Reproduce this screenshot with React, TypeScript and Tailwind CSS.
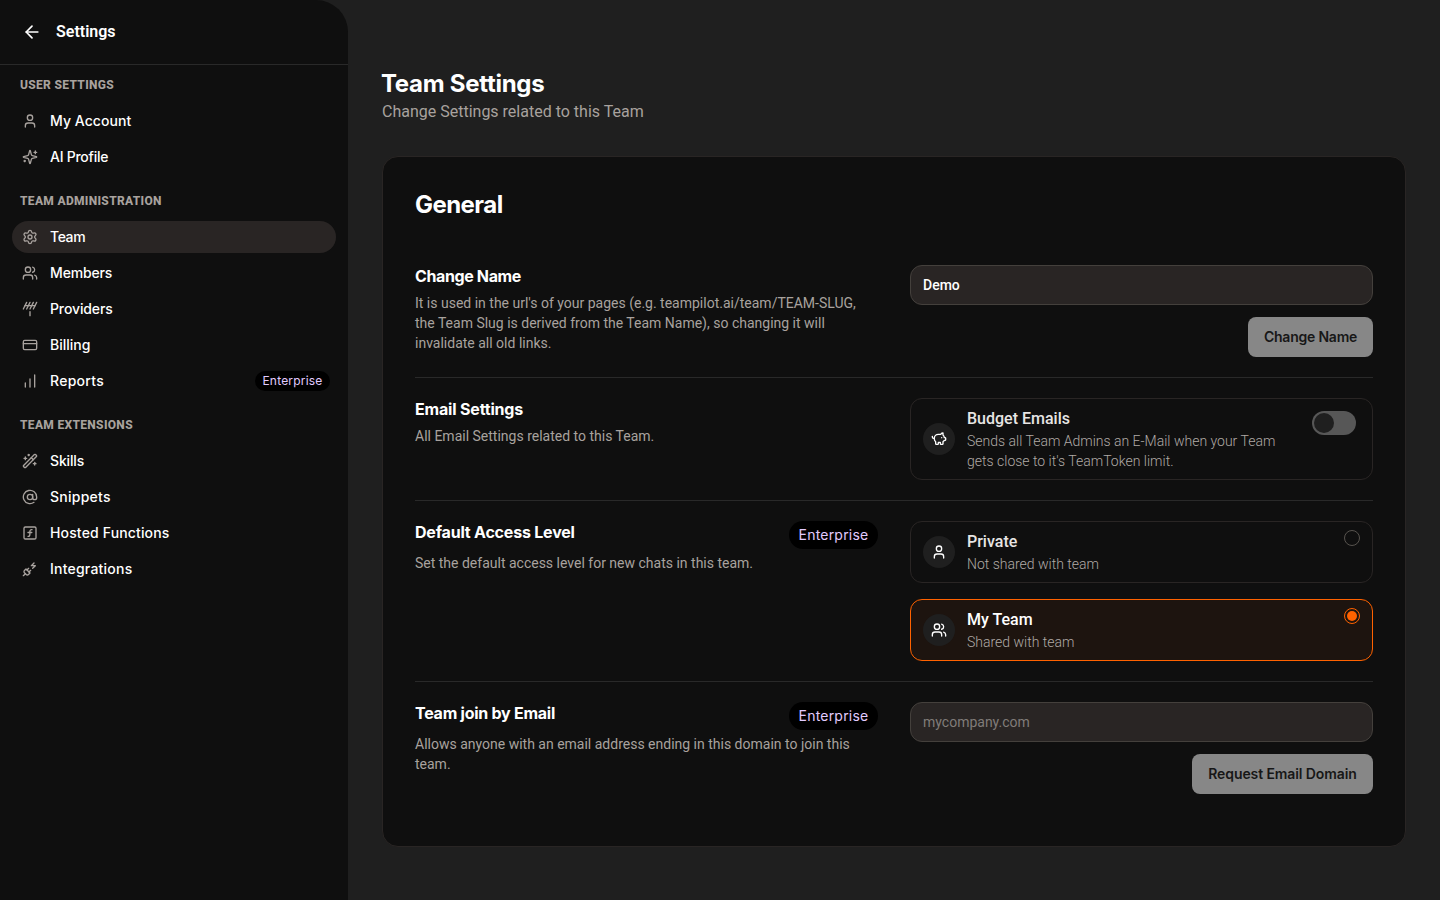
import type { ComponentType, ReactNode } from 'react'
import {
  Antenna,
  ArrowLeft,
  AtSign,
  ChartNoAxesColumnIncreasing,
  CreditCard,
  PiggyBank,
  PlugZap,
  Settings,
  SquareFunction,
  User,
  Users,
  WandSparkles,
} from 'lucide-react'

type Icon = ComponentType<{ className?: string }>

interface NavItem {
  name: string
  icon: Icon
  tracking: string
  active?: boolean
  enterprise?: boolean
}

interface NavGroup {
  title: string
  items: NavItem[]
}

function Sparkles({ className }: { className?: string }) {
  return (
    <svg
      viewBox="0 0 24 24"
      fill="none"
      stroke="currentColor"
      strokeWidth="2"
      strokeLinecap="round"
      strokeLinejoin="round"
      className={className}
    >
      <path d="M9.937 15.5A2 2 0 0 0 8.5 14.063l-6.135-1.582a.5.5 0 0 1 0-.962L8.5 9.936A2 2 0 0 0 9.937 8.5l1.582-6.135a.5.5 0 0 1 .963 0L14.063 8.5A2 2 0 0 0 15.5 9.937l6.135 1.581a.5.5 0 0 1 0 .964L15.5 14.063a2 2 0 0 0-1.437 1.437l-1.582 6.135a.5.5 0 0 1-.963 0z" />
      <path d="M20 3v4" />
      <path d="M22 5h-4" />
      <path d="M4 17v2" />
      <path d="M5 18H3" />
    </svg>
  )
}

const groups: NavGroup[] = [
  {
    title: 'User Settings',
    items: [
      { name: 'My Account', icon: User, tracking: 'tracking-[0.05px]' },
      { name: 'AI Profile', icon: Sparkles, tracking: 'tracking-[-0.25px]' },
    ],
  },
  {
    title: 'Team Administration',
    items: [
      { name: 'Team', icon: Settings, tracking: 'tracking-[-0.4px]', active: true },
      { name: 'Members', icon: Users, tracking: 'tracking-[-0.15px]' },
      { name: 'Providers', icon: Antenna, tracking: 'tracking-[-0.12px]' },
      { name: 'Billing', icon: CreditCard, tracking: 'tracking-normal' },
      { name: 'Reports', icon: ChartNoAxesColumnIncreasing, tracking: 'tracking-[0.28px]', enterprise: true },
    ],
  },
  {
    title: 'Team Extensions',
    items: [
      { name: 'Skills', icon: WandSparkles, tracking: 'tracking-[-0.15px]' },
      { name: 'Snippets', icon: AtSign, tracking: 'tracking-[0.25px]' },
      { name: 'Hosted Functions', icon: SquareFunction, tracking: 'tracking-[0.15px]' },
      { name: 'Integrations', icon: PlugZap, tracking: 'tracking-[0.22px]' },
    ],
  },
]

function Sidebar() {
  return (
    <aside className="w-[348px] h-full shrink-0 rounded-tr-[32px] bg-[#0f0f0f]">
      <div className="h-[65px] flex items-center gap-3.5 border-b border-[#292929] px-[22px]">
        <ArrowLeft className="w-5 h-5 text-white" />
        <h2 className="text-base font-semibold text-white">Settings</h2>
      </div>

      <nav className="px-3 pt-3">
        {groups.map((group) => (
          <div key={group.title} className="mb-5">
            <h3 className="h-4 mb-3 px-2 text-xs leading-4 font-extrabold uppercase tracking-[0.32px] text-[#a8a29e]">
              {group.title}
            </h3>
            <div className="flex flex-col gap-1">
              {group.items.map((item) => (
                <a
                  key={item.name}
                  href="#"
                  className={`h-8 flex items-center rounded-full pl-2.5 pr-1.5 ${item.active ? 'bg-[#292524]' : ''}`}
                >
                  <item.icon className="w-4 h-4 mr-3 text-[#a8a29e]" />
                  <span className={`font-['Inter'] text-sm font-medium text-white ${item.tracking}`}>{item.name}</span>
                  {item.enterprise && (
                    <span className="ml-auto w-[75px] h-5 flex items-center justify-center rounded-full bg-black font-['Inter'] text-xs tracking-[0.2px] text-[#e2cbff]">
                      Enterprise
                    </span>
                  )}
                </a>
              ))}
            </div>
          </div>
        ))}
      </nav>
    </aside>
  )
}

interface SettingRowProps {
  title: string
  titleClass: string
  description: string
  enterprise?: boolean
  children: ReactNode
}

function SettingRow({ title, titleClass, description, enterprise, children }: SettingRowProps) {
  return (
    <section className="grid grid-cols-2 gap-8 border-b border-[#292929] py-5 last:border-b-0">
      <div>
        <div className="flex items-start justify-between">
          <h3 className={`pb-0.5 font-['Inter'] text-base leading-[22px] font-bold text-white ${titleClass}`}>
            {title}
          </h3>
          {enterprise && (
            <span className="w-[89px] h-7 flex items-center justify-center rounded-full bg-black font-['Inter'] text-sm tracking-[0.2px] text-[#e2cbff]">
              Enterprise
            </span>
          )}
        </div>
        <p className="mt-1 text-sm leading-5 text-[#a8a29e]">{description}</p>
      </div>
      <div className="flex flex-col">{children}</div>
    </section>
  )
}

interface OptionCardProps {
  icon: Icon
  title: string
  description: string
  selected?: boolean
  control: ReactNode
}

function OptionCard({ icon: Icon, title, description, selected, control }: OptionCardProps) {
  return (
    <div
      className={`flex items-center rounded-xl border px-3 py-[7px] ${
        selected ? 'border-[#ff6200] bg-[#1d140f]' : 'border-[#292524]'
      }`}
    >
      <div className="w-8 h-8 flex shrink-0 items-center justify-center rounded-full bg-[#1f1f1f]">
        <Icon className="w-4 h-4 text-white" />
      </div>
      <div className="ml-3 w-[325px]">
        <p className={`text-base leading-[26px] font-medium ${selected ? 'text-white' : 'text-[#e7e5e4]'}`}>{title}</p>
        <p className="-mt-px mb-px text-sm leading-5 font-light text-[#b0aaa6]">{description}</p>
      </div>
      <div className="ml-auto self-start">{control}</div>
    </div>
  )
}

function Radio({ checked }: { checked?: boolean }) {
  return (
    <div
      className={`mt-px w-4 h-4 flex items-center justify-center rounded-full border ${
        checked ? 'border-[#ff6200]' : 'border-[#57534e]'
      }`}
    >
      {checked && <div className="w-2.5 h-2.5 rounded-full bg-[#ff6200]" />}
    </div>
  )
}

export default function App() {
  return (
    <div className="flex h-screen overflow-hidden bg-[#1f1f1f] font-['Roboto',sans-serif]">
      <Sidebar />

      <main className="flex-1 px-[34px] pt-[68px]">
        <h1 className="-ml-px font-['Inter'] text-2xl leading-8 font-bold tracking-[-0.28px] text-white">
          Team Settings
        </h1>
        <p className="text-base leading-6 text-[#a8a29e]">Change Settings related to this Team</p>

        <div className="mt-8 h-[691px] rounded-2xl border border-[#292524] bg-[#0f0f0f] px-8 pt-8">
          <h2 className="mb-6 font-['Inter'] text-2xl leading-8 font-bold tracking-[-0.55px] text-white">General</h2>

          <SettingRow
            title="Change Name"
            titleClass="tracking-[-0.38px]"
            description="It is used in the url's of your pages (e.g. teampilot.ai/team/TEAM-SLUG, the Team Slug is derived from the Team Name), so changing it will invalidate all old links."
          >
            <input
              defaultValue="Demo"
              className="h-10 rounded-xl border border-[#44403c] bg-[#292524] px-3 text-sm font-medium text-white"
            />
            <button className="mt-3 w-[125px] h-10 self-end rounded-lg bg-[#878787] font-['Inter'] text-sm font-semibold tracking-[-0.22px] text-[#171717]">
              Change Name
            </button>
          </SettingRow>

          <SettingRow
            title="Email Settings"
            titleClass="tracking-[-0.18px]"
            description="All Email Settings related to this Team."
          >
            <OptionCard
              icon={PiggyBank}
              title="Budget Emails"
              description="Sends all Team Admins an E-Mail when your Team gets close to it's TeamToken limit."
              control={
                <div className="mt-[5px] mr-1 w-11 h-6 rounded-full bg-[#575757] p-0.5">
                  <div className="w-5 h-5 rounded-full bg-[#1f1f1f]" />
                </div>
              }
            />
          </SettingRow>

          <SettingRow
            title="Default Access Level"
            titleClass="tracking-[-0.2px]"
            description="Set the default access level for new chats in this team."
            enterprise
          >
            <div className="flex flex-col gap-4">
              <OptionCard icon={User} title="Private" description="Not shared with team" control={<Radio />} />
              <OptionCard icon={Users} title="My Team" description="Shared with team" selected control={<Radio checked />} />
            </div>
          </SettingRow>

          <SettingRow
            title="Team join by Email"
            titleClass="tracking-[-0.25px]"
            description="Allows anyone with an email address ending in this domain to join this team."
            enterprise
          >
            <input
              placeholder="mycompany.com"
              className="h-10 rounded-xl border border-[#44403c] bg-[#292524] px-3 text-sm text-white placeholder:text-[#807c79]"
            />
            <button className="mt-3 w-[181px] h-10 self-end rounded-lg bg-[#878787] font-['Inter'] text-sm font-semibold tracking-[-0.1px] text-[#171717]">
              Request Email Domain
            </button>
          </SettingRow>
        </div>
      </main>
    </div>
  )
}
